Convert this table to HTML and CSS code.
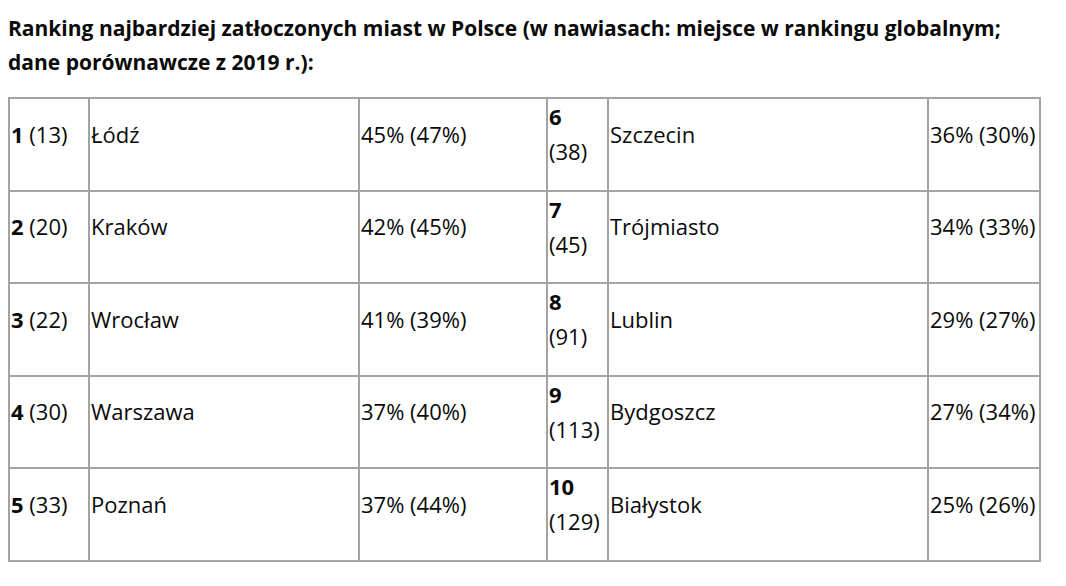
FILE: index.html
```html
<!DOCTYPE html>
<html lang="pl">
<head>
<meta charset="utf-8">
<title>Ranking</title>
<link rel="stylesheet" href="styles.css">
</head>
<body>
<p class="title">Ranking najbardziej zatłoczonych miast w Polsce (w nawiasach: miejsce w rankingu globalnym; dane porównawcze z 2019 r.):</p>
<table class="rank">
<colgroup>
<col class="c1"><col class="c2"><col class="c3"><col class="c4"><col class="c5"><col class="c6">
</colgroup>
<tbody>
<tr>
<td><p><b>1</b> (13)</p></td><td><p>Łódź</p></td><td><p>45% (47%)</p></td>
<td><p><b>6</b><br>(38)</p></td><td><p>Szczecin</p></td><td><p>36% (30%)</p></td>
</tr>
<tr>
<td><p><b>2</b> (20)</p></td><td><p>Kraków</p></td><td><p>42% (45%)</p></td>
<td><p><b>7</b><br>(45)</p></td><td><p>Trójmiasto</p></td><td><p>34% (33%)</p></td>
</tr>
<tr>
<td><p><b>3</b> (22)</p></td><td><p>Wrocław</p></td><td><p>41% (39%)</p></td>
<td><p><b>8</b><br>(91)</p></td><td><p>Lublin</p></td><td><p>29% (27%)</p></td>
</tr>
<tr>
<td><p><b>4</b> (30)</p></td><td><p>Warszawa</p></td><td><p>37% (40%)</p></td>
<td><p><b>9</b><br>(113)</p></td><td><p>Bydgoszcz</p></td><td><p>27% (34%)</p></td>
</tr>
<tr>
<td><p><b>5</b> (33)</p></td><td><p>Poznań</p></td><td><p>37% (44%)</p></td>
<td><p><b>10</b><br>(129)</p></td><td><p>Białystok</p></td><td><p>25% (26%)</p></td>
</tr>
</tbody>
</table>
</body>
</html>
```
FILE: styles.css
```css
html, body {
  background: #ffffff;
}
body {
  margin: 8px;
  font-family: "Open Sans", "Noto Sans", sans-serif;
  color: #0a0a0a;
}
.title {
  margin: 0;
  padding-top: 3px;
  width: 1010px;
  font-size: 21px;
  font-weight: 700;
  line-height: 34px;
}
.rank {
  margin-top: 18px;
  width: 1033px;
  table-layout: fixed;
  border-collapse: separate;
  border-spacing: 0;
  border: 1px solid #a3a3a3;
  font-size: 22px;
}
.c1 { width: 80px; }
.c2 { width: 270px; }
.c3 { width: 188px; }
.c4 { width: 61px; }
.c5 { width: 320px; }
.c6 { width: 112px; }
.rank td {
  border: 1px solid #a3a3a3;
  padding: 0 1px;
  vertical-align: middle;
}
.rank td p {
  margin: 0 0 20.6px;
  line-height: 35px;
  white-space: nowrap;
}
.rank b {
  font-weight: 700;
}
```
